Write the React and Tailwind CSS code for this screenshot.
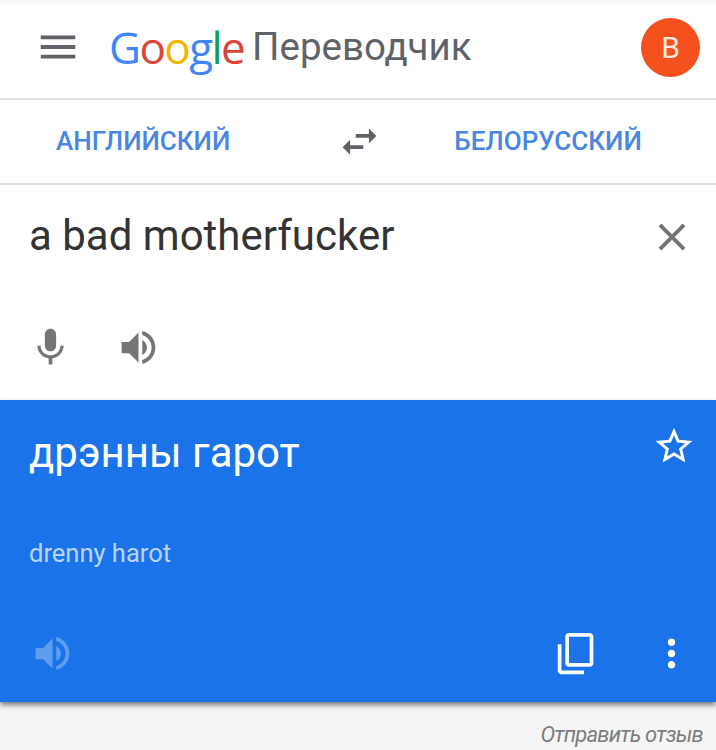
import React from 'react';

const Icon = ({ d, className }) => (
  <svg viewBox="0 0 24 24" fill="currentColor" className={className}>
    <path d={d} />
  </svg>
);

const MENU = 'M3 18h18v-2H3v2zm0-5h18v-2H3v2zm0-7v2h18V6H3z';
const SWAP = 'M6.99 11L3 15l3.99 4v-3H14v-2H6.99v-3zM21 9l-3.99-4v3H10v2h7.01v3L21 9z';
const CLOSE = 'M19 6.41L17.59 5 12 10.59 6.41 5 5 6.41 10.59 12 5 17.59 6.41 19 12 13.41 17.59 19 19 17.59 13.41 12z';
const MIC = 'M12 14c1.66 0 2.99-1.34 2.99-3L15 5c0-1.66-1.34-3-3-3S9 3.34 9 5v6c0 1.66 1.34 3 3 3zm5.3-3c0 3-2.54 5.1-5.3 5.1S6.7 14 6.7 11H5c0 3.41 2.72 6.23 6 6.72V21h2v-3.28c3.28-.48 6-3.3 6-6.72h-1.7z';
const VOLUME = 'M3 9v6h4l5 5V4L7 9H3zm13.5 3c0-1.77-1.02-3.29-2.5-4.03v8.05c1.48-.73 2.5-2.25 2.5-4.02zM14 3.23v2.06c2.89.86 5 3.54 5 6.71s-2.11 5.85-5 6.71v2.06c4.01-.91 7-4.49 7-8.77s-2.99-7.86-7-8.77z';
const STAR = 'M22 9.24l-7.19-.62L12 2 9.19 8.63 2 9.24l5.46 4.73L5.82 21 12 17.27 18.18 21l-1.63-7.03L22 9.24zM12 15.4l-3.76 2.27 1-4.28-3.32-2.88 4.38-.38L12 6.1l1.71 4.04 4.38.38-3.32 2.88 1 4.28L12 15.4z';
// front sheet top right, back sheet runs down the left and along the bottom
const COPY = 'M8 1h11c1.1 0 2 .9 2 2v14c0 1.1-.9 2-2 2H8c-1.1 0-2-.9-2-2V3c0-1.1.9-2 2-2zm0 2v14h11V3H8zM2 7h2v14h12v2H4c-1.1 0-2-.9-2-2V7z';
const MORE = 'M12 8c1.1 0 2-.9 2-2s-.9-2-2-2-2 .9-2 2 .9 2 2 2zm0 2c-1.1 0-2 .9-2 2s.9 2 2 2 2-.9 2-2-.9-2-2-2zm0 6c-1.1 0-2 .9-2 2s.9 2 2 2 2-.9 2-2-.9-2-2-2z';

export default function App() {
  return (
    <div className="w-[716px] h-[750px] overflow-hidden flex flex-col bg-[#f5f5f5] font-['Roboto',sans-serif]">
      {/* Top Bar */}
      <div className="h-[100px] flex-shrink-0 flex items-center pl-[35px] pr-[16px] pb-[4px] bg-gradient-to-b from-[#f4f4f4] via-white via-[6%] to-white border-b-2 border-[#e0e0e0]">
        <Icon d={MENU} className="w-[46px] h-[46px] text-[#5f6368]" />
        <div className="ml-[28px] flex items-baseline text-[44px] leading-none tracking-[-1.6px] font-medium font-['Open_Sans',sans-serif]">
          <span className="text-[#4285f4]">G</span>
          <span className="text-[#db4437]">o</span>
          <span className="text-[#f4b400]">o</span>
          <span className="text-[#4285f4]">g</span>
          <span className="text-[#0f9d58]">l</span>
          <span className="text-[#db4437]">e</span>
        </div>
        <span className="ml-[8px] text-[38.5px] leading-none text-[#5f6368]">Переводчик</span>
        <div className="ml-auto w-[59px] h-[59px] rounded-full bg-[#f4511e] flex items-center justify-center text-[30px] text-[#fde7df]">
          В
        </div>
      </div>

      {/* Language Row */}
      <div className="h-[85px] flex-shrink-0 flex items-center bg-white border-b-2 border-[#e0e0e0] text-[26px] font-medium text-[#4a86e0]">
        <span className="ml-[56px]">АНГЛИЙСКИЙ</span>
        <Icon d={SWAP} className="ml-[107px] w-[45px] h-[45px] text-[#5f6368]" />
        <span className="ml-[72px]">БЕЛОРУССКИЙ</span>
      </div>

      {/* Source */}
      <div className="h-[215px] flex-shrink-0 flex flex-col bg-white">
        <div className="flex items-start justify-between pl-[29px] pr-[21px] pt-[26px]">
          <span className="text-[42px] leading-[50px] text-[#333333]">a bad motherfucker</span>
          <Icon d={CLOSE} className="mt-[3px] w-[46px] h-[46px] text-[#757575]" />
        </div>
        <div className="mt-[64px] flex items-center pl-[28px] gap-[43px] text-[#757575]">
          <Icon d={MIC} className="w-[45px] h-[45px]" />
          <Icon d={VOLUME} className="w-[45px] h-[45px]" />
        </div>
      </div>

      {/* Translation */}
      <div className="h-[302px] flex-shrink-0 flex flex-col bg-[#1a73e8] text-white shadow-[0_3px_5px_rgba(0,0,0,0.5)]">
        <div className="flex items-start justify-between pl-[29px] pr-[20px] pt-[28px]">
          <span className="text-[42px] leading-[50px]">дрэнны гарот</span>
          <Icon d={STAR} className="mt-[-4px] w-[44px] h-[44px]" />
        </div>
        <div className="mt-[59px] pl-[29px] text-[25.5px] leading-[32px] text-white/70">drenny harot</div>
        <div className="mt-auto mb-[26px] flex items-center pl-[30px] pr-[22px]">
          <Icon d={VOLUME} className="w-[45px] h-[45px] text-white/30" />
          <Icon d={COPY} className="ml-auto w-[45px] h-[45px]" />
          <Icon d={MORE} className="ml-[50px] w-[45px] h-[45px]" />
        </div>
      </div>

      {/* Footer */}
      <div className="flex justify-end pr-[13px] pt-[20px] text-[22px] leading-[26px] tracking-[-0.8px] italic text-[#7d7d7d]">
        Отправить отзыв
      </div>
    </div>
  );
}
